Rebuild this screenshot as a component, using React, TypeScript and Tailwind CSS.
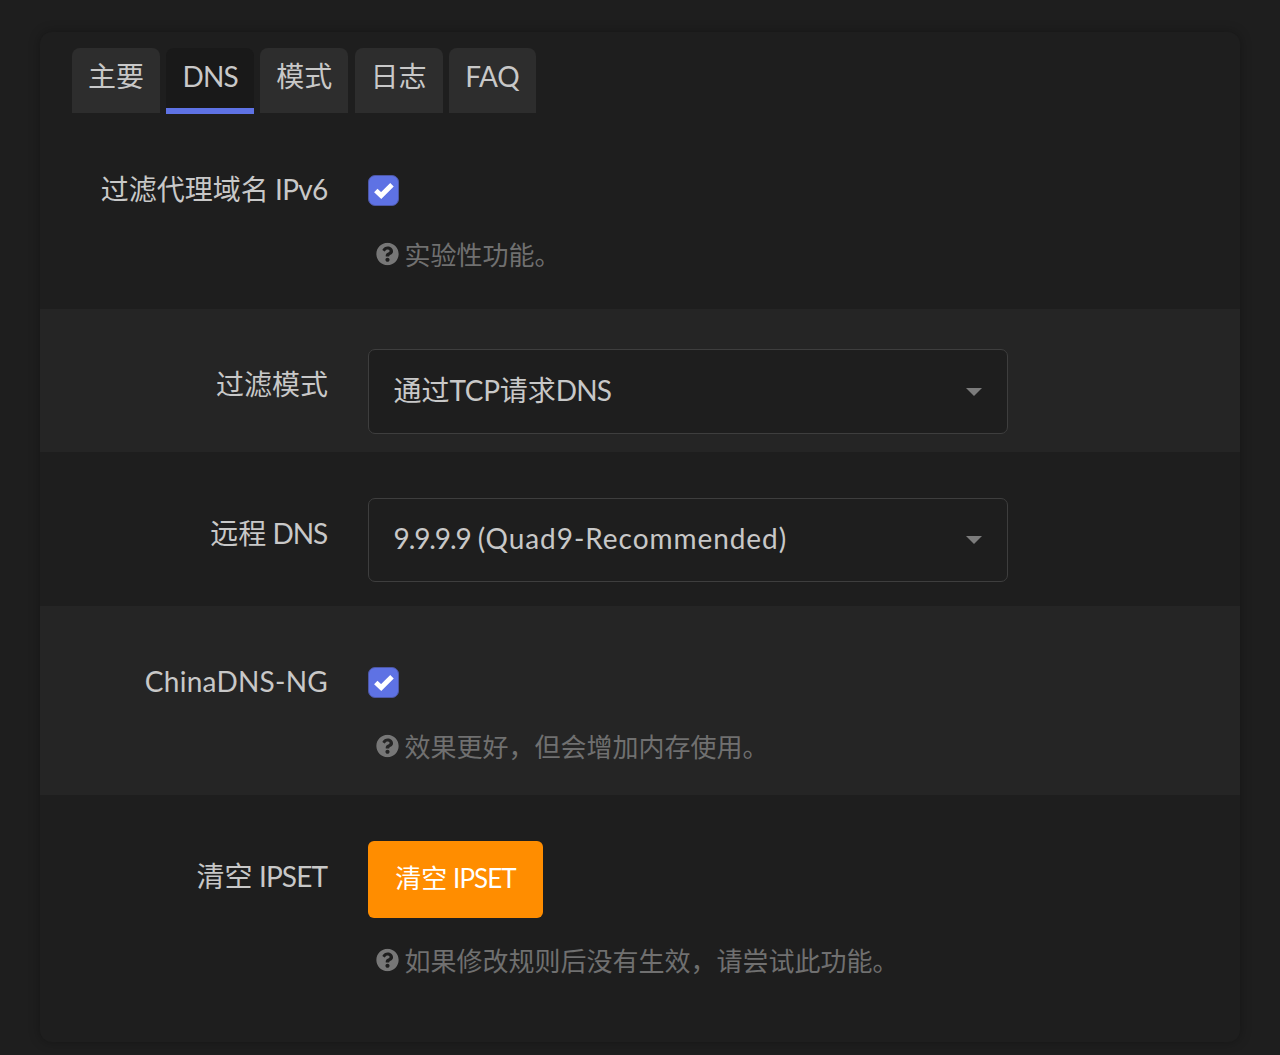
import type { ReactNode } from 'react';
import { FaQuestionCircle } from 'react-icons/fa';

const tabs = [
  { label: '主要', style: 'w-[88px]' },
  { label: 'DNS', style: 'w-[88px] tracking-[-0.9px]' },
  { label: '模式', style: 'w-[88px]' },
  { label: '日志', style: 'w-[88px]' },
  { label: 'FAQ', style: 'w-[87px] tracking-[-0.3px]' },
];

function Row({ label, className, labelClass, children }: { label: ReactNode; className: string; labelClass: string; children: ReactNode }) {
  return (
    <div className={`flex ${className}`}>
      <div className={`w-[288px] shrink-0 text-right text-[28px] leading-10 whitespace-nowrap ${labelClass}`}>{label}</div>
      <div className="ml-10 flex flex-col items-start">{children}</div>
    </div>
  );
}

function Checkbox() {
  return (
    <button role="checkbox" aria-checked="true" className="flex size-[31px] items-center justify-center rounded-[7px] border border-[#4d57a5] bg-[#5e72e4]">
      <svg viewBox="0 0 20 16" className="h-4 w-5" fill="none" stroke="#fff" strokeWidth="5">
        <path d="M1.8 7.5 L7.2 12.5 L18 1.8" />
      </svg>
    </button>
  );
}

function Hint({ children, className }: { children: ReactNode; className: string }) {
  return (
    <div className={`ml-2 flex h-8 items-center gap-[5.5px] text-[26px] leading-8 whitespace-nowrap text-[#707070] ${className}`}>
      <FaQuestionCircle className="size-[23px] shrink-0 -translate-y-[1.5px] text-[#777]" />
      <span>{children}</span>
    </div>
  );
}

function Select({ children, className }: { children: ReactNode; className: string }) {
  return (
    <button className={`flex w-[640px] items-center justify-between rounded-[7px] border border-[#3e3e3e] bg-[#1e1e1e] pr-[25px] pl-[24.5px] text-[28px] leading-10 whitespace-nowrap ${className}`}>
      <span>{children}</span>
      <svg viewBox="0 0 16 8" className="mt-1 h-2 w-4" fill="#7c7c7c">
        <path d="M0 0H16L8 8Z" />
      </svg>
    </button>
  );
}

export default function App() {
  return (
    <div className="h-[1055px] overflow-hidden bg-[#1e1e1e] px-10 pt-8 font-[Lato,'Noto_Sans_CJK_SC',sans-serif] text-[#c8c8c8]">
      <main className="h-[1010px] overflow-hidden rounded-xl bg-[#1e1e1e] shadow-[0_0_12px_rgba(0,0,0,0.3)]">
        <nav className="flex h-[81px] gap-[6.2px] pt-4 pl-8">
          {tabs.map((t) => (
            <button
              key={t.label}
              className={`flex justify-center rounded-t-lg pt-2 text-[28px] leading-10 ${t.style} ${
                t.label === 'DNS' ? 'h-[66px] border-b-[6px] border-[#5e72e4] bg-[#191919]' : 'h-[65px] bg-[#2d2d2d]'
              }`}
            >
              {t.label}
            </button>
          ))}
        </nav>
        <Row className="h-[196px] pt-[62px]" labelClass="-mt-[6px]" label={<>过滤代理域名<span className="mr-[0.6px] tracking-[-0.75px]"> IPv6</span></>}>
          <Checkbox />
          <Hint className="mt-[33px]">实验性功能。</Hint>
        </Row>
        <Row className="h-[143px] bg-[#252525] pt-10" labelClass="mt-[15px]" label="过滤模式">
          <Select className="h-[85px] pb-1">通过<span className="tracking-[-0.3px]">TCP</span>请求<span className="tracking-[-0.8px]">DNS</span></Select>
        </Row>
        <Row className="h-[154px] pt-[46px]" labelClass="mt-[15px]" label={<>远程<span className="mr-[0.9px] tracking-[-1.05px]"> DNS</span></>}>
          <Select className="h-[84px] pb-1">
            <span className="tracking-[-1.1px]">9.9.9.9 </span>
            <span className="ml-px tracking-[0.95px]">(Quad9-Recommended)</span>
          </Select>
        </Row>
        <Row className="h-[189px] bg-[#252525] pt-[61px]" labelClass="-mt-[6px]" label={<span className="tracking-[0.25px]">ChinaDNS-NG</span>}>
          <Checkbox />
          <Hint className="mt-[33px]">效果更好，但会增加内存使用。</Hint>
        </Row>
        <Row className="pt-[46px]" labelClass="mt-[15px]" label={<>清空<span className="mr-[0.8px] tracking-[-0.85px]"> IPSET</span></>}>
          <button className="flex h-[77px] w-[175px] items-center justify-center rounded-md bg-[#ff8d00] pb-1 text-[26px] leading-10 whitespace-nowrap text-white">
            清空<span className="tracking-[-0.95px]">&nbsp;IPSET</span>
          </button>
          <Hint className="mt-[27px]">如果修改规则后没有生效，请尝试此功能。</Hint>
        </Row>
      </main>
    </div>
  );
}
